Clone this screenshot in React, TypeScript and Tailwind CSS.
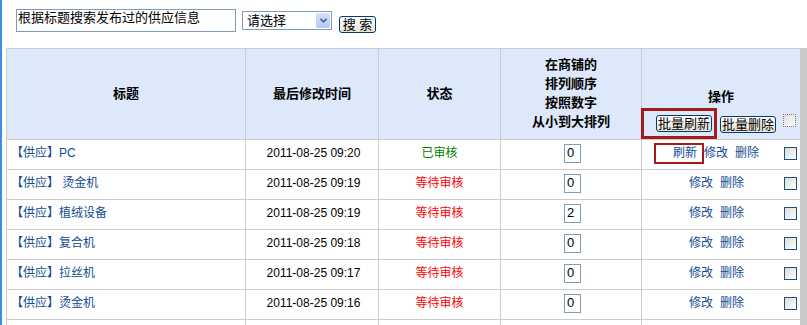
import React from 'react'

interface Row {
  title: string
  time: string
  status: 'ok' | 'wait'
  sort: string
  refresh?: boolean
}

const rows: Row[] = [
  { title: '【供应】PC', time: '2011-08-25 09:20', status: 'ok', sort: '0', refresh: true },
  { title: '【供应】 烫金机', time: '2011-08-25 09:19', status: 'wait', sort: '0' },
  { title: '【供应】植绒设备', time: '2011-08-25 09:19', status: 'wait', sort: '2' },
  { title: '【供应】复合机', time: '2011-08-25 09:18', status: 'wait', sort: '0' },
  { title: '【供应】拉丝机', time: '2011-08-25 09:17', status: 'wait', sort: '0' },
  { title: '【供应】烫金机', time: '2011-08-25 09:16', status: 'wait', sort: '0' },
]

const font = { fontFamily: '"Liberation Sans", "Noto Sans CJK SC", sans-serif' }
const cols = 'grid grid-cols-[239px_133px_122px_141px_159px]'

function Checkbox({ focused = false }: { focused?: boolean }) {
  return (
    <span
      className={`block h-[13px] w-[13px] bg-gradient-to-br from-[#dcdcd7] to-white ${
        focused ? 'border border-dotted border-[#7a7a7a]' : 'border border-[#1c5180]'
      }`}
    />
  )
}

function XpButton({ children }: { children: React.ReactNode }) {
  return (
    <button className="h-[17px] w-[56px] rounded-[3px] border border-[#003c74] bg-gradient-to-b from-white to-[#e6e3d6] text-[13px] leading-[15px] text-black">
      {children}
    </button>
  )
}

export default function App() {
  return (
    <div className="flex h-[325px] w-[807px] overflow-hidden bg-white" style={font}>
      {/* left accent */}
      <div className="w-[2px] shrink-0 bg-[#3c8ee0]" />

      <div className="flex min-h-0 flex-1 flex-col">
        {/* Search bar */}
        <div className="flex h-[48px] shrink-0 items-start">
          <div className="ml-[14px] mt-[9px] h-[23px] w-[220px] border border-[#7f9db9] pl-[1px] text-[13px] leading-[15px] text-black">
            根据标题搜索发布过的供应信息
          </div>
          <div className="ml-[6px] mt-[11px] flex h-[19px] w-[90px] items-center border border-[#7f9db9] pl-[4px] text-[13px] text-black">
            <span className="flex-1">请选择</span>
            <span className="mr-[1px] flex h-[15px] w-[14px] items-center justify-center rounded-[2px] bg-gradient-to-b from-[#d3e0fb] to-[#b4c9f4]">
              <svg width="7" height="5" viewBox="0 0 7 5">
                <path d="M0.5 0.8 L3.5 3.8 L6.5 0.8" fill="none" stroke="#4d6185" strokeWidth="1.6" />
              </svg>
            </span>
          </div>
          <div className="ml-[7px] mt-[12px]">
            <button className="h-[17px] w-[37px] rounded-[3px] border border-[#003c74] bg-gradient-to-b from-white to-[#e6e3d6] text-[13px] leading-[15px] text-black">
              搜 索
            </button>
          </div>
        </div>

        {/* Table + right strip */}
        <div className="flex min-h-0 flex-1 overflow-hidden">
          <div className="ml-[4px] w-[794px] shrink-0">
            {/* Header */}
            <div className={`${cols} h-[91px] border-t border-[#cccccc] bg-[#dde9fb] text-[13px] font-bold text-black`}>
              <div className="flex items-center justify-center border-l border-[#cccccc]">标题</div>
              <div className="flex items-center justify-center border-l border-[#cccccc]">最后修改时间</div>
              <div className="flex items-center justify-center border-l border-[#cccccc]">状态</div>
              <div className="flex flex-col items-center justify-center border-l border-[#cccccc] pb-[2px] leading-[19px]">
                <span>在商铺的</span>
                <span>排列顺序</span>
                <span>按照数字</span>
                <span>从小到大排列</span>
              </div>
              <div className="relative flex flex-col items-center border-l border-[#cccccc] pt-[39px]">
                <span className="leading-[18px]">操作</span>
                <div className="mt-[9px] flex w-full items-start pl-[14px] font-normal">
                  <XpButton>批量刷新</XpButton>
                  <span className="ml-[8px]">
                    <XpButton>批量删除</XpButton>
                  </span>
                  <span className="ml-[7px] mt-[-1px]">
                    <Checkbox focused />
                  </span>
                </div>
                <span className="pointer-events-none absolute left-[-1px] top-[59px] h-[31px] w-[76px] border-[3px] border-[#a51a1a]" />
              </div>
            </div>

            {/* Body rows */}
            {rows.map((r, i) => (
              <div key={i} className={`${cols} h-[30px] border-t border-[#cccccc] text-[12px]`}>
                <div className="flex items-center border-l border-[#cccccc] pb-[3px] pl-[4px] text-[#134c94]">
                  {r.title}
                </div>
                <div className="flex items-center justify-center border-l border-[#cccccc] pb-[3px] pl-[3px] text-black">
                  {r.time}
                </div>
                <div
                  className={`flex items-center justify-center border-l border-[#cccccc] pb-[3px] ${
                    r.status === 'ok' ? 'text-[#008000]' : 'text-[#ff0000]'
                  }`}
                >
                  {r.status === 'ok' ? '已审核' : '等待审核'}
                </div>
                <div className="flex items-center justify-center border-l border-[#cccccc] pb-[3px] pl-[3px]">
                  <span className="flex h-[19px] w-[17px] items-center border border-[#7f9db9] pl-[2px] text-[13px] text-black">
                    {r.sort}
                  </span>
                </div>
                <div className="flex items-center border-l border-[#cccccc] pb-[3px] text-[#134c94]">
                  {r.refresh ? (
                    <span className="ml-[12px] flex items-center">
                      <span className="flex h-[21px] w-[50px] items-center justify-end border-2 border-[#a51a1a] pr-[5px]">
                        刷新
                      </span>
                      <span>修改</span>
                      <span className="ml-[7px]">删除</span>
                    </span>
                  ) : (
                    <span className="ml-[47px] flex items-center">
                      <span>修改</span>
                      <span className="ml-[7px]">删除</span>
                    </span>
                  )}
                  <span className="ml-auto mr-[3px]">
                    <Checkbox />
                  </span>
                </div>
              </div>
            ))}

            {/* next row, below the fold */}
            <div className={`${cols} h-[30px] border-t border-[#cccccc]`}>
              <div className="border-l border-[#cccccc]" />
              <div className="border-l border-[#cccccc]" />
              <div className="border-l border-[#cccccc]" />
              <div className="border-l border-[#cccccc]" />
              <div className="border-l border-[#cccccc]" />
            </div>
          </div>
          <div className="w-[7px] shrink-0 bg-[#c9c9c9]" />
        </div>
      </div>
    </div>
  )
}
